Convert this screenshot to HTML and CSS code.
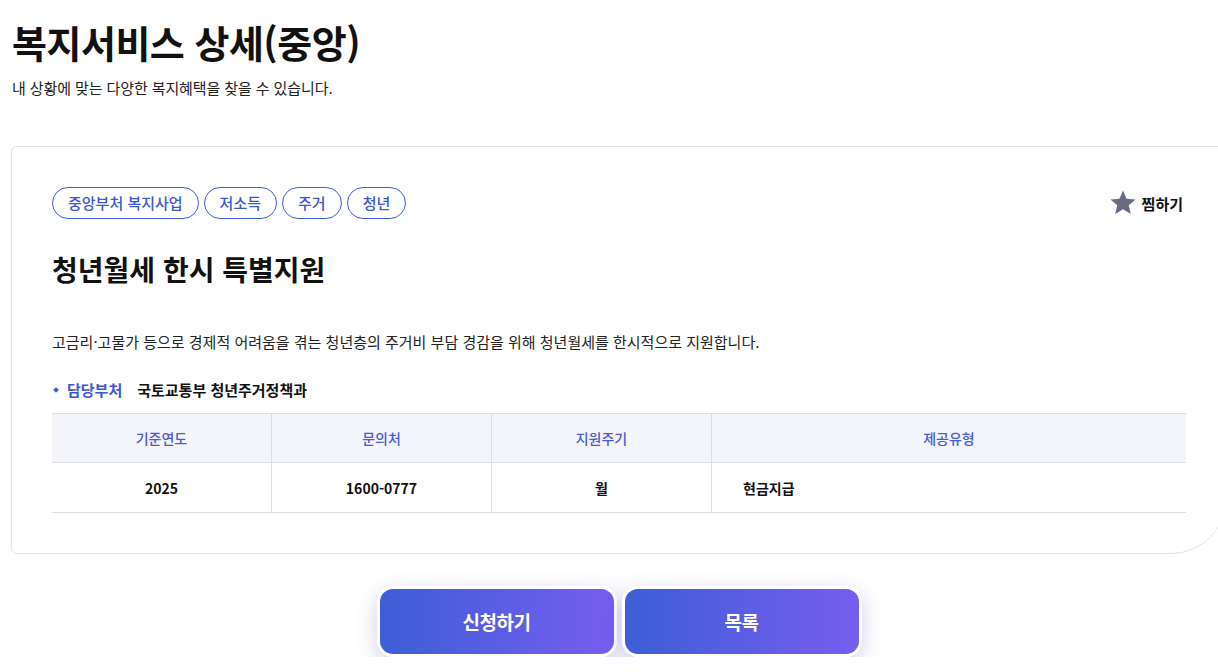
FILE: index.html
```html
<!DOCTYPE html>
<html lang="ko">
<head>
<meta charset="utf-8">
<title>복지서비스 상세(중앙)</title>
<link rel="stylesheet" href="styles.css">
</head>
<body>
<div class="page">
  <header class="page-head">
    <h1 class="page-title">복지서비스 상세(중앙)</h1>
    <p class="page-sub">내 상황에 맞는 다양한 복지혜택을 찾을 수 있습니다.</p>
  </header>

  <section class="card">
    <div class="card-top">
      <ul class="tags">
        <li class="tag">중앙부처 복지사업</li>
        <li class="tag">저소득</li>
        <li class="tag">주거</li>
        <li class="tag">청년</li>
      </ul>
      <button class="fav" type="button">
        <svg class="fav-icon" viewBox="0 0 24 24" width="28" height="28" aria-hidden="true">
          <path d="M12 1.2l3.05 7.1 7.7.62-5.850 5.05 1.8 7.53L12 17.45 5.3 21.5l1.8-7.53L1.25 8.92l7.7-.62z" fill="#686b82"/>
        </svg>
        <span>찜하기</span>
      </button>
    </div>

    <h2 class="svc-title">청년월세 한시 특별지원</h2>
    <p class="svc-desc">고금리·고물가 등으로 경제적 어려움을 겪는 청년층의 주거비 부담 경감을 위해 청년월세를 한시적으로 지원합니다.</p>

    <div class="dept">
      <span class="dept-label">담당부처</span>
      <span class="dept-value">국토교통부 청년주거정책과</span>
    </div>

    <table class="info">
      <thead>
        <tr>
          <th class="c1">기준연도</th>
          <th class="c2">문의처</th>
          <th class="c3">지원주기</th>
          <th class="c4">제공유형</th>
        </tr>
      </thead>
      <tbody>
        <tr>
          <td>2025</td>
          <td>1600-0777</td>
          <td>월</td>
          <td class="left">현금지급</td>
        </tr>
      </tbody>
    </table>
  </section>

  <div class="actions">
    <button class="btn" type="button">신청하기</button>
    <button class="btn" type="button">목록</button>
  </div>
</div>
</body>
</html>
```

FILE: styles.css
```css
html, body {
  margin: 0;
  padding: 0;
  background: #ffffff;
  overflow: hidden;
}

body {
  font-family: "Noto Sans CJK KR", "Noto Sans", sans-serif;
  color: #111111;
}

.page {
  width: 1216px;
  padding: 15px 0 0 11px;
}

.page-title {
  margin: 0 0 0 1px;
  font-size: 38px;
  line-height: 54px;
  font-weight: 700;
  letter-spacing: -0.5px;
  color: #111111;
}

.page-sub {
  margin: 9px 0 0 1px;
  font-size: 15px;
  line-height: 20px;
  letter-spacing: -0.1px;
  color: #222222;
}

.card {
  margin-top: 48px;
  border: 1px solid #e2e2e2;
  border-radius: 6px 6px 56px 6px;
  padding: 40px 40px 40px 40px;
}

.card-top {
  display: flex;
  align-items: center;
  justify-content: space-between;
}

.tags {
  display: flex;
  gap: 5px;
  list-style: none;
  margin: 0;
  padding: 0;
}

.tag {
  height: 30px;
  line-height: 30px;
  padding: 0 15px;
  border: 1px solid #3f5fd8;
  border-radius: 16px;
  font-size: 15px;
  font-weight: 500;
  color: #3b57d2;
}

.fav {
  display: flex;
  align-items: center;
  gap: 5px;
  margin-right: 3px;
  padding: 0;
  border: 0;
  background: none;
  font-family: inherit;
  font-size: 15px;
  font-weight: 700;
  color: #111111;
}

.svc-title {
  margin: 30px 0 0 0;
  font-size: 28px;
  line-height: 40px;
  font-weight: 700;
  letter-spacing: 0;
}

.svc-desc {
  margin: 42px 0 0 0;
  font-size: 15px;
  line-height: 22px;
  letter-spacing: 0;
  color: #222222;
}

.dept {
  display: flex;
  align-items: center;
  margin-top: 27px;
  font-size: 15px;
  line-height: 20px;
  font-weight: 700;
}

.dept-label {
  position: relative;
  padding-left: 15px;
  color: #3b57d2;
  margin-right: 15px;
}

.dept-label::before {
  content: "";
  position: absolute;
  left: 2px;
  top: 8px;
  width: 4px;
  height: 4px;
  background: #3b57d2;
  transform: rotate(45deg);
}

.dept-value {
  color: #111111;
}

.info {
  width: 100%;
  margin-top: 13px;
  border-collapse: collapse;
  table-layout: fixed;
  font-size: 14px;
}

.info th,
.info td {
  border: 1px solid #dedede;
  text-align: center;
  padding: 0;
}

.info tr > :first-child { border-left: 0; }
.info tr > :last-child { border-right: 0; }

.info th {
  height: 48px;
  background: #f4f5fa;
  font-weight: 500;
  color: #4a5bd6;
}

.info td {
  height: 49px;
  font-weight: 700;
  color: #111111;
}

.info td.left {
  text-align: left;
  padding-left: 31px;
}

.c1, .c2, .c3 { width: 219px; }

.actions {
  display: flex;
  justify-content: center;
  gap: 5px;
  margin-top: 32px;
}

.btn {
  width: 240px;
  height: 71px;
  border: 3px solid #ffffff;
  border-radius: 16px;
  background: linear-gradient(90deg, #3d5ed6 0%, #775df0 100%);
  box-shadow: 0 6px 20px rgba(70, 60, 180, 0.26);
  color: #ffffff;
  font-family: inherit;
  font-size: 19px;
  font-weight: 700;
  letter-spacing: -0.5px;
}
```
